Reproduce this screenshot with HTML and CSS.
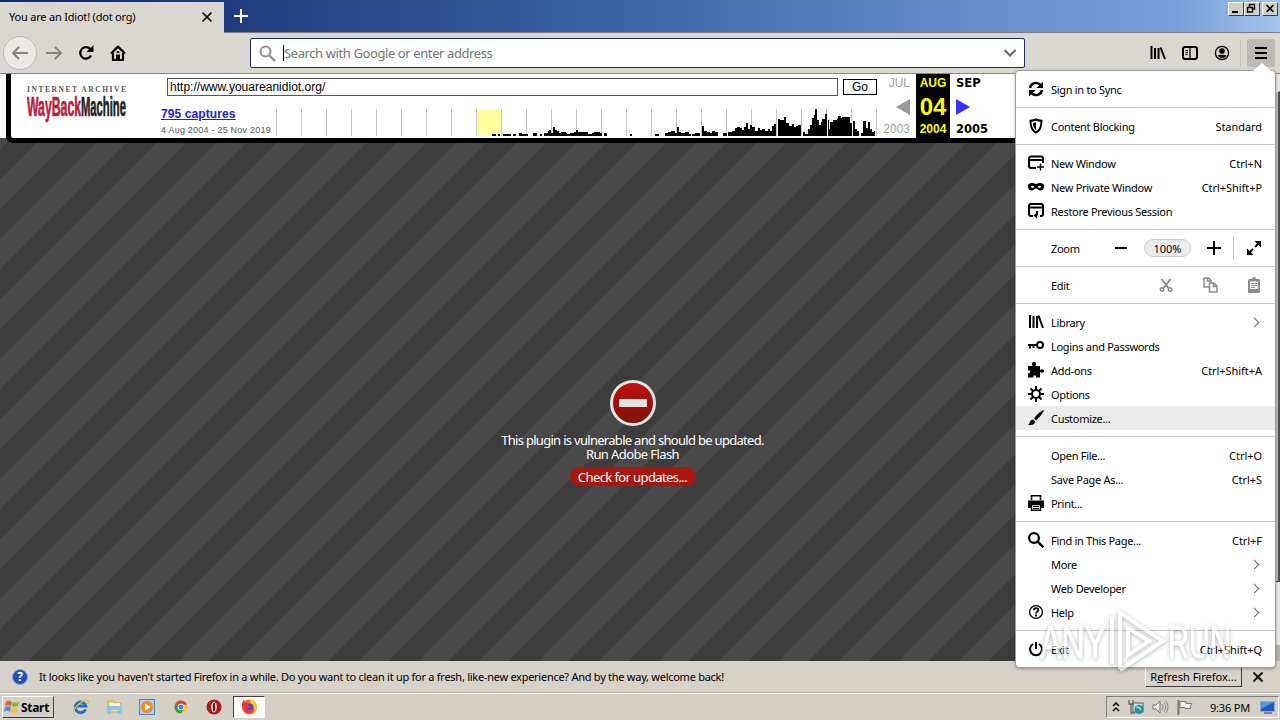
FILE: index.html
```html
<!DOCTYPE html>
<html lang="en">
<head>
  <meta charset="UTF-8" />
  <meta name="viewport" content="width=device-width, initial-scale=1.0"/>
  <title>You are an Idiot! (dot org)</title>
  <link rel="stylesheet" href="styles.css">
</head>
<body>
  <div class="titlebar">
    <div class="tab">
      <span class="tab-title">You are an Idiot! (dot org)</span>
      <svg class="tab-close" width="10" height="10" viewBox="0 0 10 10"><path d="M.5 .5l9 9M9.500 .5l-9 9" stroke="#111" stroke-width="1.600"/></svg>
    </div>
    <svg class="new-tab" width="14" height="14" viewBox="0 0 14 14"><path d="M7 0v14M0 7h14" stroke="#fff" stroke-width="2"/></svg>
    <div class="win-buttons">
      <div class="win-btn"><svg width="12" height="11" viewBox="0 0 12 11"><path d="M3 9h6" stroke="#000" stroke-width="2"/></svg></div>
      <div class="win-btn"><svg width="12" height="11" viewBox="0 0 12 11"><path d="M4 1.500h6M4.500 1v3M9.500 1v5H8M2 4.500h6M2.500 4v5h5V4" fill="none" stroke="#000" stroke-width="1.400"/></svg></div>
      <div class="win-btn gap"><svg width="12" height="11" viewBox="0 0 12 11"><path d="M3.500 2l7 7M10.500 2l-7 7" stroke="#000" stroke-width="1.600"/></svg></div>
    </div>
  </div>

  <div class="toolbar">
    <div class="nav">
      <div class="back"><svg width="18" height="16" viewBox="0 0 18 16"><path d="M17 8H2M8 2L2 8l6 6" fill="none" stroke="#858380" stroke-width="2"/></svg></div>
      <svg width="17" height="16" viewBox="0 0 17 16"><path d="M0 8h15M9 2l6 6-6 6" fill="none" stroke="#858380" stroke-width="2"/></svg>
      <svg width="16" height="16" viewBox="0 0 16 16"><path d="M13 10.500A5.700 5.700 0 1 1 12.500 4.500" fill="none" stroke="#000" stroke-width="2.200"/><path d="M15.500 0v7h-7z"/></svg>
      <svg width="16" height="16" viewBox="0 0 16 16"><path d="M1 8.500L8 1.600l7 6.900M3 8v7h10V8" fill="none" stroke="#000" stroke-width="2.200" stroke-linejoin="round"/><path d="M6 15V9.500h4V15z"/><path d="M6.800 6h2.400v2H6.800z"/></svg>
    </div>
    <div class="urlbar">
      <svg width="17" height="17" viewBox="0 0 17 17"><circle cx="6.500" cy="6.500" r="5" fill="none" stroke="#939395" stroke-width="2.200"/><path d="M10.500 10.500l5.500 5.500" stroke="#939395" stroke-width="2.400"/></svg>
      <span class="placeholder">Search with Google or enter address</span>
      <svg width="14" height="8" viewBox="0 0 14 8"><path d="M1.500 1L7 6.500 12.500 1" fill="none" stroke="#666" stroke-width="2"/></svg>
    </div>
    <div class="tools">
      <svg width="16" height="16" viewBox="0 0 16 16"><path d="M1.500 1v13M5 3v11M8.500 3v11M10.500 2.500l4.500 11.500" stroke="#000" stroke-width="2" fill="none"/></svg>
      <svg width="16" height="14" viewBox="0 0 16 14"><rect x="1" y="1" width="14" height="12" rx="2" fill="none" stroke="#000" stroke-width="2"/><path d="M8 1v12M3.500 4.500h2.500M3.500 6.500h2.500M3.500 8.500h2" stroke="#000" stroke-width="1.200"/></svg>
      <svg width="16" height="16" viewBox="0 0 16 16"><circle cx="8" cy="8" r="6.600" fill="none" stroke="#000" stroke-width="1.300"/><circle cx="8" cy="6" r="2.800"/><path d="M3.500 10.500c2-1 7-1 9 0-1.500 3.500-7.500 3.500-9 0z"/></svg>
      <div class="hamburger"><svg width="12" height="12" viewBox="0 0 12 12"><path d="M0 1h12M0 6h12M0 11h12" stroke="#000" stroke-width="2"/></svg></div>
    </div>
  </div>

  <div class="page">
    <div class="wayback-wrap">
      <div class="wayback">
        <svg class="wb-logo" width="102" height="61" viewBox="0 0 102 61">
          <text x="0" y="18" class="wb-small" textLength="99">INTERNET ARCHIVE</text>
          <g transform="translate(0 42) scale(1 1.750)">
            <text x="0" y="0" class="wb-red" textLength="54" lengthAdjust="spacingAndGlyphs">WayBack</text>
            <text x="54" y="0" class="wb-black" textLength="45" lengthAdjust="spacingAndGlyphs">Machine</text>
          </g>
        </svg>
        <div class="wb-main">
          <div class="wb-form">
            <div class="wb-url">http://www.youareanidiot.org/</div>
            <div class="wb-go">Go</div>
          </div>
          <div class="wb-row">
            <div class="wb-captures">
              <a href="#">795 captures</a>
              <span>4 Aug 2004 - 25 Nov 2019</span>
            </div>
            <svg class="spark" width="601" height="29" viewBox="276 108 601 29">
              <path fill="#ffffa0" d="M476 109h25v27h-25z"/>
              <path stroke="#c4c4c4" d="M276.500 109v27M301.500 109v27M326.500 109v27M351.500 109v27M376.500 109v27M401.500 109v27M426.500 109v27M451.500 109v27M476.500 109v27M501.500 109v27M526.500 109v27M551.500 109v27M576.500 109v27M601.500 109v27M626.500 109v27M651.500 109v27M676.500 109v27M701.500 109v27M726.500 109v27M751.500 109v27M776.500 109v27M801.500 109v27M826.500 109v27M851.500 109v27M876.500 109v27"/>
              <path d="M492 136v-2h4v2zM498 136v-2h2v2zM503 136v-2h8v2zM513 136v-2h3v2zM519 136v-3h3v1h6v2zM533 136v-3h4v3zM540 136v-2h2v2zM544 136v-3h4v-2h1v-1h2v3h2v-6h2v3h2v1h2v2h2v-1h5v1h1V136zM567 136v-2h3v-1h4v-1h2v-2h2v2h10v2h4v-1h2v-1h6v1h2V136zM604 136v-3h3v3zM630 136v-2h2v2zM655 136v-2h4v2z"/>
              <path d="M665 136V133H668V132H671V131H675V133H677V127H679V132H681V133H685V132H689V134H691V136zM692 136V134H695V133H700V136zM702 136V126H704V131H707V132H710V133H712V131H715V132H718V136zM723 136V133H727V136z"/>
              <path d="M728 136V132H732V131H735V128H737V127H740V128H742V130H744V127H746V123H748V129H750V125H752V127H755V131H758V128H760V130H762V129H765V131H768V129H770V131H772V126H774V124H776V136z"/>
              <path d="M778 136V119H780V120H784V117H786V123H789V126H792V124H794V127H796V126H798V125H801V136zM803 136V132H805V134H808V129H810V125H812V118H814V115H815V109H817V120H819V125H821V122H822V119H825V114H827V120H829V129H830V122H833V120H837V119H838V116H841V118H842V117H850V123H853V121H855V129H857V131H859V136zM861 136V133H863V121H866V128H868V122H870V129H872V132H874V131H875V136z"/>
              <path stroke="#fff" d="M777.500 109v27M802.500 127v9M827.500 109v27M852.500 109v27"/>
            </svg>
          </div>
        </div>
        <div class="month prev"><span class="m">JUL</span><i class="arrow left"></i><span class="y">2003</span></div>
        <div class="month current"><span class="m">AUG</span><b>04</b><span class="y">2004</span></div>
        <div class="month next"><span class="m">SEP</span><i class="arrow right"></i><span class="y">2005</span></div>
      </div>
    </div>

    <div class="plugin">
      <div class="no-entry"><span></span></div>
      <p>This plugin is vulnerable and should be updated.</p>
      <p class="run">Run Adobe Flash</p>
      <a class="check" href="#">Check for updates...</a>
    </div>
    <div class="scrollbar"><div class="thumb"></div></div>
  </div>

  <div class="notification">
    <div class="question">?</div>
    <span class="note-text">It looks like you haven't started Firefox in a while. Do you want to clean it up for a fresh, like-new experience? And by the way, welcome back!</span>
    <div class="refresh">R<u>e</u>fresh Firefox...</div>
    <svg width="10" height="10" viewBox="0 0 10 10"><path d="M.5 .5l9 9M9.500 .5l-9 9" stroke="#111" stroke-width="2"/></svg>
  </div>

  <div class="taskbar">
    <div class="start">
      <svg width="16" height="16" viewBox="0 0 16 16"><path d="M2 3c2-2 4-1 6 0L7 7C5 6 3 6 1 7z" fill="#e8602c"/><path d="M9 3c2 1 4 1 6 0l-1 4c-2 1-4 1-6 0z" fill="#7db93b"/><path d="M1 8c2-1 4-1 6 0l-1 5c-2-2-4-1-6 0z" fill="#4a8fd8"/><path d="M8 8c2 1 4 1 6 0l-1 5c-2 1-4 1-6 0z" fill="#f7c331"/></svg>
      <span>Start</span>
    </div>
    <div class="quick">
      <svg width="17" height="16" viewBox="0 0 17 16"><path d="M13.500 10.500a5.300 5.300 0 1 1 .3-3.500H5" fill="none" stroke="#1d74c8" stroke-width="3"/><path d="M2 15C-1 11 11-1 16 1.500c1 .5 0 2-1 3" fill="none" stroke="#edb92e" stroke-width="1.300"/></svg>
      <svg width="17" height="16" viewBox="0 0 17 16"><path d="M2 2h6l1 2h6v9H2z" fill="#f3dc82" stroke="#c6a94d"/><path d="M1 7h15v8h-4v-4H5v4H1z" fill="#8ac4ea"/><path d="M4 4h10v3H4z" fill="#fff6cb"/></svg>
      <svg width="17" height="16" viewBox="0 0 17 16"><rect x=".5" y=".5" width="15" height="15" fill="#a9cdee" stroke="#5287bd"/><circle cx="8" cy="8" r="6" fill="#f28a1c"/><path d="M6 4.500v7l5.500-3.500z" fill="#fff"/></svg>
      <svg width="17" height="16" viewBox="0 0 17 16"><circle cx="8" cy="8" r="6.500" fill="#f4c430"/><path d="M2.400 4.700a6.500 6.500 0 0 1 11.600 1H8L5 9z" fill="#dc4437"/><path d="M2.400 4.700A6.500 6.500 0 0 0 8 14.500l3-5-5 0z" fill="#2ba24c"/><circle cx="8" cy="8" r="3.300" fill="#fff"/><circle cx="8" cy="8" r="2.500" fill="#4285f4"/></svg>
      <svg width="17" height="16" viewBox="0 0 17 16"><circle cx="8" cy="8" r="7.500" fill="#b41818"/><ellipse cx="8" cy="8" rx="2.800" ry="5.300" fill="#fff"/><ellipse cx="8" cy="8" rx="1.200" ry="4.600" fill="#7d0909"/></svg>
    </div>
    <div class="task-active">
      <svg width="17" height="16" viewBox="0 0 17 16"><circle cx="8.500" cy="8" r="7.500" fill="#ff6a1f"/><path d="M9 0c5 1 7 5 7 8s-2 6-5 7c4-4 3-9-2-11z" fill="#ffca28"/><circle cx="8.500" cy="8" r="3.600" fill="#5b3fc4"/><path d="M1 5c0-2 1-3 2-4 0 2 2 2 5 3L6 6l3 1c0 2-3 2-4 2 1 3 5 4 8 1-1 6-12 7-12-5z" fill="#f4323c"/></svg>
    </div>
    <div class="tray">
      <svg width="8" height="10" viewBox="0 0 8 10"><path d="M1 4l3-3 3 3M1 9l3-3 3 3" fill="none" stroke="#000" stroke-width="1.500"/></svg>
      <svg width="16" height="16" viewBox="0 0 16 16"><rect x="5" y="4" width="10" height="9" fill="#c8e0e8" stroke="#557"/><circle cx="11" cy="10.500" r="4.500" fill="#2b8f9c"/><path d="M8 9c2-2 4 0 5 2" stroke="#a8e3b0" stroke-width="1.500" fill="none"/><path d="M1 1v4h4V1M3 5v9h4" fill="none" stroke="#666" stroke-width="1.300"/></svg>
      <svg width="17" height="14" viewBox="0 0 17 14"><path d="M1 5h3l4-4v12L4 9H1z" fill="#eee" stroke="#777"/><path d="M10 4q2 3 0 6M12 2.500q3.500 4.500 0 9M14 1q4 6 0 12" fill="none" stroke="#8a8a8a"/></svg>
      <svg width="16" height="15" viewBox="0 0 16 15"><path d="M1.500 0v15" stroke="#777" stroke-width="2"/><path d="M3 1.500h6v2h6l-2 3 1 2H8v-1H3z" fill="#f4f4f4" stroke="#777"/></svg>
      <span class="clock">9:36 PM</span>
      <svg width="15" height="13" viewBox="0 0 15 13"><rect x=".5" y=".5" width="14" height="10" fill="#1c5cc0" stroke="#8fa6cf"/><path d="M1 1h13L1 8z" fill="#5794e2"/><path d="M4 12h8" stroke="#667" stroke-width="1.500"/></svg>
    </div>
  </div>

  <div class="menu">
    <div class="item"><svg class="ic" viewBox="0 0 16 16"><path d="M2 7a6 6 0 0 1 10.500-3M14 9A6 6 0 0 1 3.500 12" fill="none" stroke="#000" stroke-width="2.300"/><path d="M15 .5V7H8.500zM1 15.500V9h6.500z"/></svg><span>Sign in to Sync</span></div>
    <hr>
    <div class="item"><svg class="ic" viewBox="0 0 16 16"><path d="M8 1.500c2 1 4 1.200 5.500 1.200 0 6-1 9.500-5.500 12-4.500-2.500-5.500-6-5.500-12C4 2.700 6 2.500 8 1.500z" fill="none" stroke="#000" stroke-width="2"/><path d="M8 4c-1 .6-2 .8-3 .9 0 3 .7 5 3 7z"/></svg><span>Content Blocking</span><kbd>Standard</kbd></div>
    <hr>
    <div class="item"><svg class="ic" viewBox="0 0 16 16"><path d="M8 13H3a2 2 0 0 1-2-2V3.500a2 2 0 0 1 2-2h10a2 2 0 0 1 2 2V8M1 5h14" fill="none" stroke="#000" stroke-width="2"/><path d="M12.500 8.500v7M9 12h7" stroke="#000" stroke-width="1.400"/></svg><span>New Window</span><kbd>Ctrl+N</kbd></div>
    <div class="item"><svg class="ic" viewBox="0 0 16 16"><path fill-rule="evenodd" d="M0 7c0-4 5-3.500 8-2 3-1.500 8-2 8 2 0 3-1.500 4.500-3.500 4.500S9.500 9.500 8 9.500s-2.500 2-4.500 2S0 10 0 7zm2.500.8c1 1.500 3 1.500 4 0-1-1.500-3-1.500-4 0zm7 0c1 1.500 3 1.500 4 0-1-1.500-3-1.500-4 0z"/></svg><span>New Private Window</span><kbd>Ctrl+Shift+P</kbd></div>
    <div class="item"><svg class="ic" viewBox="0 0 16 16"><path d="M5 13H3a2 2 0 0 1-2-2V3a2 2 0 0 1 2-2h10a2 2 0 0 1 2 2v8a2 2 0 0 1-2 2h-1M1 4.500h14M9 8v3.500a2 2 0 0 1-2 1" fill="none" stroke="#000" stroke-width="2"/><path d="M9 9.500v6L5.500 12.500z"/></svg><span>Restore Previous Session</span></div>
    <hr>
    <div class="item zoom">
      <span>Zoom</span>
      <svg width="14" height="14" viewBox="0 0 14 14"><path d="M1 7h12" stroke="#000" stroke-width="2"/></svg>
      <div class="percent">100%</div>
      <svg width="14" height="14" viewBox="0 0 14 14"><path d="M0 7h14M7 0v14" stroke="#000" stroke-width="2"/></svg>
      <div class="full"><svg width="14" height="14" viewBox="0 0 14 14"><path d="M2 12l4-4M8 6l4-4" stroke="#000" stroke-width="2"/><path d="M7.500 0H14v6.500zM0 7.500V14h6.500z"/></svg></div>
    </div>
    <hr>
    <div class="item edit">
      <span>Edit</span>
      <svg width="14" height="14" viewBox="0 0 14 14"><path d="M2.500 1l7 9M11.500 1l-7 9" stroke="#8c8c8c" stroke-width="2"/><circle cx="3" cy="11.500" r="1.800" fill="none" stroke="#8c8c8c" stroke-width="1.400"/><circle cx="11" cy="11.500" r="1.800" fill="none" stroke="#8c8c8c" stroke-width="1.400"/></svg>
      <svg width="15" height="16" viewBox="0 0 15 16"><path d="M6 10H1V1h4.500L8 3.500V5M4.500 1v3H8" fill="none" stroke="#8c8c8c" stroke-width="1.500"/><path d="M6.500 6H11l3 3v6H6.500zM10.500 6v3.500H14" fill="none" stroke="#8c8c8c" stroke-width="1.500"/></svg>
      <svg width="12" height="16" viewBox="0 0 12 16"><path fill="#8c8c8c" d="M1.500 2H4a2 2 0 0 1 4 0h2.500A1.500 1.500 0 0 1 12 3.500v11a1.500 1.500 0 0 1-1.500 1.500h-9A1.500 1.500 0 0 1 0 14.500v-11A1.500 1.500 0 0 1 1.500 2z"/><path d="M2 4.500h8V12H2z" fill="#fff"/><path d="M3 6.500h6M3 8.500h6M3 10.500h4" stroke="#8c8c8c"/></svg>
    </div>
    <hr>
    <div class="item"><svg class="ic" viewBox="0 0 16 16"><path d="M2 1v13M5.500 2v12M9 2v12M10.500 1.500l4.500 12.500" stroke="#000" stroke-width="2" fill="none"/></svg><span>Library</span><i class="chev"></i></div>
    <div class="item"><svg class="ic" viewBox="0 0 16 16"><circle cx="12" cy="7" r="3" fill="none" stroke="#000" stroke-width="2"/><path d="M9 7H0M2 7v3.500M5.500 7v3" stroke="#000" stroke-width="2"/></svg><span>Logins and Passwords</span></div>
    <div class="item"><svg class="ic" viewBox="0 0 16 16"><path d="M0 4h4.500C3 1.500 4.500 0 6 0s3 1.500 1.500 4H12v4c2.500-1.500 4-.5 4 1s-1.500 2.500-4 1v5.500H8c1-3-3.500-3-2.500 0H0V11c3 1 3-3.500 0-2.500z"/></svg><span>Add-ons</span><kbd>Ctrl+Shift+A</kbd></div>
    <div class="item"><svg class="ic" viewBox="0 0 16 16"><circle cx="8" cy="8" r="4" fill="none" stroke="#000" stroke-width="2"/><path d="M8 0v3.500M8 12.500V16M0 8h3.500M12.500 8H16M2.500 2.500l2.300 2.300M11.200 11.200l2.300 2.300M13.500 2.500l-2.300 2.300M4.800 11.200l-2.300 2.300" stroke="#000" stroke-width="1.900"/></svg><span>Options</span></div>
    <div class="item hover"><svg class="ic" viewBox="0 0 16 16"><path d="M15.600.4c1 1-5 8-7.500 10L6 8.300C8 5.500 14.500-.6 15.600.4zM5 9.500l2 2c0 3-3.500 4-7 3.500 2-1 1.500-5.500 5-5.500z"/></svg><span>Customize...</span></div>
    <hr>
    <div class="item"><span class="ic"></span><span>Open File...</span><kbd>Ctrl+O</kbd></div>
    <div class="item"><span class="ic"></span><span>Save Page As...</span><kbd>Ctrl+S</kbd></div>
    <div class="item"><svg class="ic" viewBox="0 0 16 16"><path d="M3.500 5V.8h9V5" fill="none" stroke="#000" stroke-width="1.600"/><path d="M0 5.500h16V13h-3V9.500H3V13H0z"/><path d="M3.500 9.500h9v5.700h-9z" fill="#fff" stroke="#000" stroke-width="1.400"/><path d="M5 11.500h6M5 13.500h6" stroke="#000"/></svg><span>Print...</span></div>
    <hr>
    <div class="item"><svg class="ic" viewBox="0 0 16 16"><circle cx="6" cy="6" r="4.900" fill="none" stroke="#000" stroke-width="2.200"/><path d="M9.700 9.700l5.600 5.600" stroke="#000" stroke-width="2.500"/></svg><span>Find in This Page...</span><kbd>Ctrl+F</kbd></div>
    <div class="item"><span class="ic"></span><span>More</span><i class="chev"></i></div>
    <div class="item"><span class="ic"></span><span>Web Developer</span><i class="chev"></i></div>
    <div class="item"><svg class="ic" viewBox="0 0 16 16"><circle cx="8" cy="8" r="6.400" fill="none" stroke="#000" stroke-width="1.300"/><path d="M5.800 6.300c0-3 4.600-2.900 4.600-.3 0 1.600-2.300 1.600-2.300 3.500" fill="none" stroke="#000" stroke-width="1.800"/><path d="M7.100 10.500h2v2h-2z"/></svg><span>Help</span><i class="chev"></i></div>
    <hr>
    <div class="item"><svg class="ic" viewBox="0 0 16 16"><path d="M5 3a6 6 0 1 0 6 0M8 1v7" fill="none" stroke="#000" stroke-width="2"/></svg><span>Exit</span><kbd>Ctrl+Shift+Q</kbd></div>
  </div>

  <svg class="watermark" width="212" height="84" viewBox="0 0 212 84">
    <text x="9" y="59" textLength="66" lengthAdjust="spacingAndGlyphs">ANY</text>
    <path d="M81 17v48M89 70V14l43 28-43 29M97 29v27l21-14z" fill="none" stroke="#fff" stroke-width="4"/>
    <text x="137" y="59" textLength="63" lengthAdjust="spacingAndGlyphs">RUN</text>
  </svg>
</body>
</html>
```
FILE: styles.css
```css
* {
  box-sizing: border-box;
}
body {
  width: 1280px;
  height: 720px;
  margin: 0;
  overflow: hidden;
  display: flex;
  flex-direction: column;
  position: relative;
  background-color: #d4d0c8;
  font-family: 'Noto Sans', sans-serif;
  font-size: 11px;
  color: #000;
}
svg {
  display: block;
  flex: none;
}
.titlebar {
  height: 33px;
  display: flex;
  align-items: flex-start;
  background: linear-gradient(to right, #0c2a6c 0, #1f3b7e 225px, #3b66aa 640px, #6a92cc 1010px, #78a0d8 1180px, #a3c6ee 1280px);
  border-bottom: 1px solid #777a80;
}
.tab {
  width: 224px;
  height: 31px;
  margin-top: 2px;
  padding: 0 12px 2px 9px;
  display: flex;
  align-items: center;
  justify-content: space-between;
  background-color: #dad7d1;
  box-shadow: 0 1px #dad7d1;
}
.tab-title {
  letter-spacing: -0.2px;
}
.new-tab {
  margin: 9px 0 0 10px;
}
.win-buttons {
  display: flex;
  margin: 2px 2px 0 auto;
}
.win-btn {
  width: 16px;
  height: 14px;
  border: 1px solid;
  border-color: #fff #404040 #404040 #fff;
  background-color: #d4d0c8;
}
.win-btn.gap {
  margin-left: 2px;
}
.toolbar {
  height: 41px;
  display: flex;
  align-items: center;
  background-color: #dad7d1;
  border-bottom: 1px solid #8a8884;
}
.nav {
  width: 250px;
  padding-left: 3px;
  display: flex;
  align-items: center;
  gap: 15.5px;
}
.back {
  width: 34px;
  height: 34px;
  margin-right: -7px;
  border: 1px solid #bdbab5;
  border-radius: 50%;
  background-color: #ebe9e6;
  display: flex;
  align-items: center;
  justify-content: center;
}
.urlbar {
  width: 775px;
  height: 30px;
  padding: 0 7px 0 8px;
  border: 1px solid #1c2b60;
  border-radius: 2px;
  background-color: #fff;
  display: flex;
  align-items: center;
}
.placeholder {
  flex: 1;
  margin-left: 7px;
  border-left: 1px solid #000;
  font-size: 13px;
  line-height: 16px;
  letter-spacing: -0.4px;
  color: #757575;
}
.tools {
  flex: 1;
  display: flex;
  align-items: center;
  gap: 16px;
  padding-left: 125px;
}
.hamburger {
  width: 28px;
  height: 28px;
  margin-left: 1px;
  background-color: #bcb9b5;
  border-radius: 2px;
  box-shadow: -6px 0 #dad7d1, -7px 0 #c3c0bb;
  display: flex;
  align-items: center;
  justify-content: center;
}
.page {
  height: 587px;
  position: relative;
  display: flex;
  flex-direction: column;
  background-color: #3e3e3e;
  background-image: linear-gradient(135deg, #494949 25%, #3d3d3d 25%, #3d3d3d 50%, #494949 50%, #494949 75%, #3d3d3d 75%);
  background-size: 60px 60px;
  background-position: 0 -14px;
}
.wayback-wrap {
  height: 69px;
  padding-left: 6px;
  background: linear-gradient(#fff, #fff) no-repeat 0 0 / 12px 64px;
}
.wayback {
  height: 69px;
  border-left: 5px solid #000;
  border-bottom: 5px solid #000;
  border-bottom-left-radius: 7px;
  background-color: #fff;
  display: flex;
  font-family: 'Liberation Sans', Arial, sans-serif;
}
.wb-logo {
  margin: 0 0 0 16px;
}
.wb-small {
  font: bold 7.5px 'Liberation Serif', serif;
  fill: #555;
}
.wb-red,
.wb-black {
  font: bold 16px 'Liberation Sans', sans-serif;
  fill: #b8203c;
  stroke: #b8203c;
  stroke-width: 0.4px;
}
.wb-black {
  fill: #222;
  stroke: #222;
}
.wb-main {
  width: 716px;
  margin-left: 32px;
}
.wb-form {
  display: flex;
  align-items: center;
  gap: 5px;
  padding: 4px 0 0 6px;
}
.wb-url {
  width: 671px;
  height: 18px;
  padding-left: 2px;
  border: 1px solid #555;
  font-size: 12px;
  line-height: 16px;
  letter-spacing: 0.02px;
}
.wb-go {
  width: 34px;
  height: 16px;
  border: 1px solid #000;
  font-size: 12px;
  line-height: 14px;
  text-align: center;
}
.wb-row {
  display: flex;
  margin-top: 10px;
}
.wb-captures {
  width: 115px;
  white-space: nowrap;
}
.wb-captures a {
  display: block;
  font-size: 12px;
  font-weight: bold;
  line-height: 16px;
  color: #2222cc;
  letter-spacing: 0.1px;
}
.wb-captures span {
  display: block;
  font-size: 9px;
  line-height: 16px;
  letter-spacing: 0.22px;
  color: #555;
}
.spark {
  margin-top: 2px;
}
.month {
  height: 64px;
  display: flex;
  flex-direction: column;
  align-items: center;
  justify-content: space-between;
  font-size: 12px;
  line-height: 18px;
}
.month.prev {
  width: 39px;
  padding-right: 6px;
  align-items: flex-end;
  color: #a0a0a0;
}
.month.current {
  width: 34px;
  background-color: #000;
  color: #ff0;
  font-weight: bold;
}
.month.current b {
  padding-top: 2px;
  font-size: 24px;
}
.month.next {
  padding-left: 6px;
  align-items: flex-start;
  font-family: 'DejaVu Sans', sans-serif;
  font-size: 11.5px;
  font-weight: bold;
}
.arrow {
  width: 0;
  height: 0;
  margin-top: 2px;
  border: 8px solid transparent;
}
.arrow.left {
  border-width: 8px 14px 8px 0;
  border-right-color: #9a9a9a;
}
.arrow.right {
  border-width: 8px 0 8px 14px;
  border-left-color: #3333f0;
}
.plugin {
  margin: 237px 0 0 -15px;
  display: flex;
  flex-direction: column;
  align-items: center;
  color: #fff;
  font-size: 13px;
  line-height: 14px;
  letter-spacing: -0.7px;
}
.no-entry {
  width: 46px;
  height: 46px;
  margin-bottom: 7px;
  border: 3px solid #e6e4e2;
  border-radius: 50%;
  background: linear-gradient(#bf1010, #7c1409);
  display: flex;
  align-items: center;
  justify-content: center;
}
.no-entry span {
  width: 28px;
  height: 8px;
  background-color: #e6e4e2;
}
.plugin p {
  margin: 0;
}
.plugin .run {
  letter-spacing: -0.6px;
}
.check {
  margin-top: 6px;
  width: 126px;
  height: 19px;
  border-radius: 10px;
  background-color: #aa150c;
  color: #fff;
  line-height: 20px;
  letter-spacing: -0.6px;
  text-align: center;
  text-decoration: none;
}
.scrollbar {
  position: absolute;
  top: 0;
  right: 0;
  width: 4px;
  height: 587px;
  padding-top: 17px;
  background-color: #e8e6e2;
  border-bottom: 16px solid #b5b2ac;
}
.thumb {
  height: 491px;
  border-top: 1px solid #fff;
  border-right: 2px solid #505050;
  border-bottom: 1px solid #404040;
  background-color: #c0bdb8;
}
.notification {
  height: 32px;
  padding: 0 17px 0 12px;
  display: flex;
  align-items: center;
  background-color: #d6d1c9;
  border-bottom: 1px solid #bbb7b0;
}
.question {
  width: 16px;
  height: 16px;
  border: 1px solid #8aa4d8;
  border-radius: 50%;
  background-color: #2450b8;
  color: #fff;
  font-size: 12px;
  font-weight: bold;
  line-height: 14px;
  text-align: center;
}
.note-text {
  margin-left: 11px;
  white-space: nowrap;
  letter-spacing: -0.265px;
}
.refresh {
  margin-left: auto;
  margin-right: 11px;
  width: 97px;
  height: 20px;
  border: 1px solid;
  border-color: #fff #404040 #404040 #fff;
  line-height: 17px;
  text-align: center;
  white-space: nowrap;
}
.taskbar {
  flex: 1;
  display: flex;
  align-items: center;
  border-top: 1px solid #fff;
  padding: 0 0 0 2px;
  background-color: #d4d0c8;
}
.start {
  width: 52px;
  height: 22px;
  padding-left: 1px;
  display: flex;
  align-items: center;
  gap: 1px;
  border: 1px solid;
  border-color: #fff #404040 #404040 #fff;
  font-size: 12px;
  font-weight: bold;
  letter-spacing: -0.3px;
}
.quick {
  display: flex;
  gap: 16.5px;
  margin-left: 18px;
}
.task-active {
  width: 32px;
  height: 22px;
  margin-left: 10px;
  border: 1px solid;
  border-color: #404040 #fff #fff #404040;
  background-color: #fafafa;
  display: flex;
  align-items: center;
  justify-content: center;
}
.tray {
  width: 173px;
  height: 22px;
  margin-left: auto;
  margin-right: 1px;
  padding: 0 3px 0 5px;
  display: flex;
  align-items: center;
  border: 1px solid;
  border-color: #808080 #fff #fff #808080;
  gap: 8px;
}
.clock {
  margin: 0 2px 0 9px;
  white-space: nowrap;
  letter-spacing: -0.2px;
}
.menu {
  position: absolute;
  left: 1015px;
  top: 70px;
  width: 261px;
  height: 598px;
  padding: 6px 0;
  border: 1px solid #a09e9a;
  border-radius: 4px;
  background-color: #fff;
  box-shadow: 0 1px 3px rgba(0,0,0,0.3);
}
.menu::before {
  content: "";
  position: absolute;
  right: 4px;
  top: -8px;
  border: 9px solid transparent;
  border-top: 0;
  border-bottom: 8px solid #fff;
}
.menu hr {
  height: 1px;
  margin: 6px 0;
  border: 0;
  background-color: #c8c8c8;
}
.item {
  height: 24px;
  padding: 0 13px 0 12px;
  display: flex;
  align-items: center;
  letter-spacing: -0.3px;
}
.item.hover {
  background-color: #ebebeb;
}
.ic {
  width: 16px;
  height: 16px;
  margin-right: 7px;
}
.item > span {
  padding-top: 1px;
}
.item kbd {
  margin-left: auto;
  padding-top: 1px;
  font-family: inherit;
  font-size: 11px;
  letter-spacing: -0.05px;
}
.chev {
  width: 7px;
  height: 7px;
  margin: 1px 4px 0 auto;
  border: solid #666;
  border-width: 1.5px 1.5px 0 0;
  transform: rotate(45deg);
}
.zoom,
.edit {
  padding-left: 35px;
}
.zoom > span {
  width: 63px;
}
.percent {
  width: 47px;
  height: 18px;
  margin: 0 16px;
  border: 1px solid #cfcfcf;
  border-radius: 9px;
  background-color: #ececec;
  line-height: 17px;
  text-align: center;
  letter-spacing: 0;
}
.full {
  height: 24px;
  margin-left: 12px;
  padding: 5px 0 0 13px;
  border-left: 1px solid #c8c8c8;
}
.edit > span {
  width: 108px;
}
.edit svg + svg {
  margin-left: 30px;
}
.watermark {
  position: absolute;
  left: 1031px;
  top: 599px;
  opacity: 0.6;
  filter: drop-shadow(0 1px 2px rgba(0,0,0,0.5));
}
.watermark text {
  font: 46px 'Liberation Sans', sans-serif;
  fill: #fff;
  stroke: #fff;
}
```
